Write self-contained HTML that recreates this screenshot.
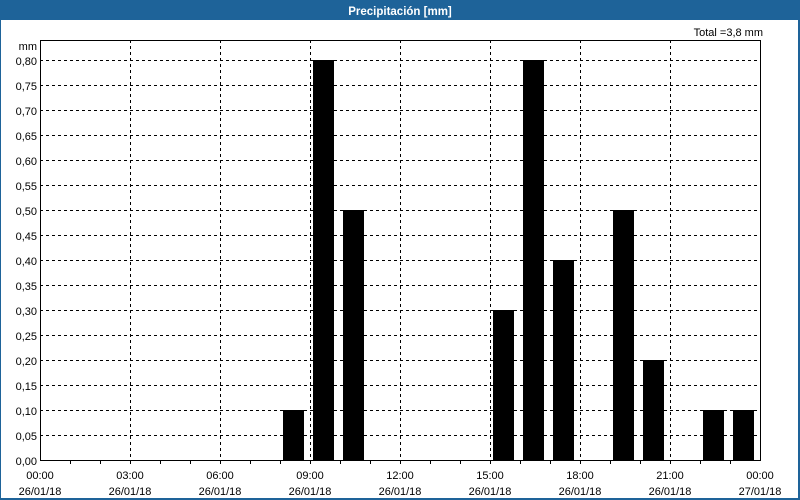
<!DOCTYPE html>
<html><head><meta charset="utf-8"><style>
html,body{margin:0;padding:0;width:800px;height:500px;overflow:hidden;background:#fff}
svg{display:block;font-family:"Liberation Sans","DejaVu Sans",sans-serif}
</style></head><body>
<svg width="800" height="500" xmlns="http://www.w3.org/2000/svg">
<rect x="0" y="0" width="800" height="500" fill="#1e6399"/>
<rect x="1" y="20" width="797" height="478" fill="#fff"/>
<text x="400" y="15" fill="#fff" font-size="11.5" font-weight="bold" text-anchor="middle">Precipitación [mm]</text>
<text x="763" y="36" font-size="11" text-anchor="end">Total =3,8 mm</text>
<text x="37" y="50" font-size="11" text-anchor="end">mm</text>
<g stroke="#000" stroke-width="1" stroke-dasharray="3,3" shape-rendering="crispEdges">
<path d="M40 60.5H760M40 85.5H760M40 110.5H760M40 135.5H760M40 160.5H760M40 185.5H760M40 210.5H760M40 235.5H760M40 260.5H760M40 285.5H760M40 310.5H760M40 335.5H760M40 360.5H760M40 385.5H760M40 410.5H760M40 435.5H760"/>
<path d="M130.5 40V460M220.5 40V460M310.5 40V460M400.5 40V460M490.5 40V460M580.5 40V460M670.5 40V460"/>
</g>
<g fill="#000">
<rect x="283" y="410" width="21" height="50"/>
<rect x="313" y="60" width="21" height="400"/>
<rect x="343" y="210" width="21" height="250"/>
<rect x="493" y="310" width="21" height="150"/>
<rect x="523" y="60" width="21" height="400"/>
<rect x="553" y="260" width="21" height="200"/>
<rect x="613" y="210" width="21" height="250"/>
<rect x="643" y="360" width="21" height="100"/>
<rect x="703" y="410" width="21" height="50"/>
<rect x="733" y="410" width="21" height="50"/>
</g>
<g stroke="#000" stroke-width="1" fill="none" shape-rendering="crispEdges">
<path d="M40.5 40.5H760.5V460.5H40.5Z"/>
<path d="M70.5 461v3M100.5 461v3M130.5 461v3M160.5 461v3M190.5 461v3M220.5 461v3M250.5 461v3M280.5 461v3M310.5 461v3M340.5 461v3M370.5 461v3M400.5 461v3M430.5 461v3M460.5 461v3M490.5 461v3M520.5 461v3M550.5 461v3M580.5 461v3M610.5 461v3M640.5 461v3M670.5 461v3M700.5 461v3M730.5 461v3"/>
</g>
<g font-size="11" text-anchor="end">
<text x="37" y="65">0,80</text><text x="37" y="90">0,75</text><text x="37" y="115">0,70</text><text x="37" y="140">0,65</text>
<text x="37" y="165">0,60</text><text x="37" y="190">0,55</text><text x="37" y="215">0,50</text><text x="37" y="240">0,45</text>
<text x="37" y="265">0,40</text><text x="37" y="290">0,35</text><text x="37" y="315">0,30</text><text x="37" y="340">0,25</text>
<text x="37" y="365">0,20</text><text x="37" y="390">0,15</text><text x="37" y="415">0,10</text><text x="37" y="440">0,05</text>
<text x="37" y="465">0,00</text>
</g>
<g font-size="11" text-anchor="middle">
<text x="40" y="479">00:00</text><text x="40" y="495">26/01/18</text>
<text x="130" y="479">03:00</text><text x="130" y="495">26/01/18</text>
<text x="220" y="479">06:00</text><text x="220" y="495">26/01/18</text>
<text x="310" y="479">09:00</text><text x="310" y="495">26/01/18</text>
<text x="400" y="479">12:00</text><text x="400" y="495">26/01/18</text>
<text x="490" y="479">15:00</text><text x="490" y="495">26/01/18</text>
<text x="580" y="479">18:00</text><text x="580" y="495">26/01/18</text>
<text x="670" y="479">21:00</text><text x="670" y="495">26/01/18</text>
<text x="760" y="479">00:00</text><text x="760" y="495">27/01/18</text>
</g>
</svg>
</body></html>
